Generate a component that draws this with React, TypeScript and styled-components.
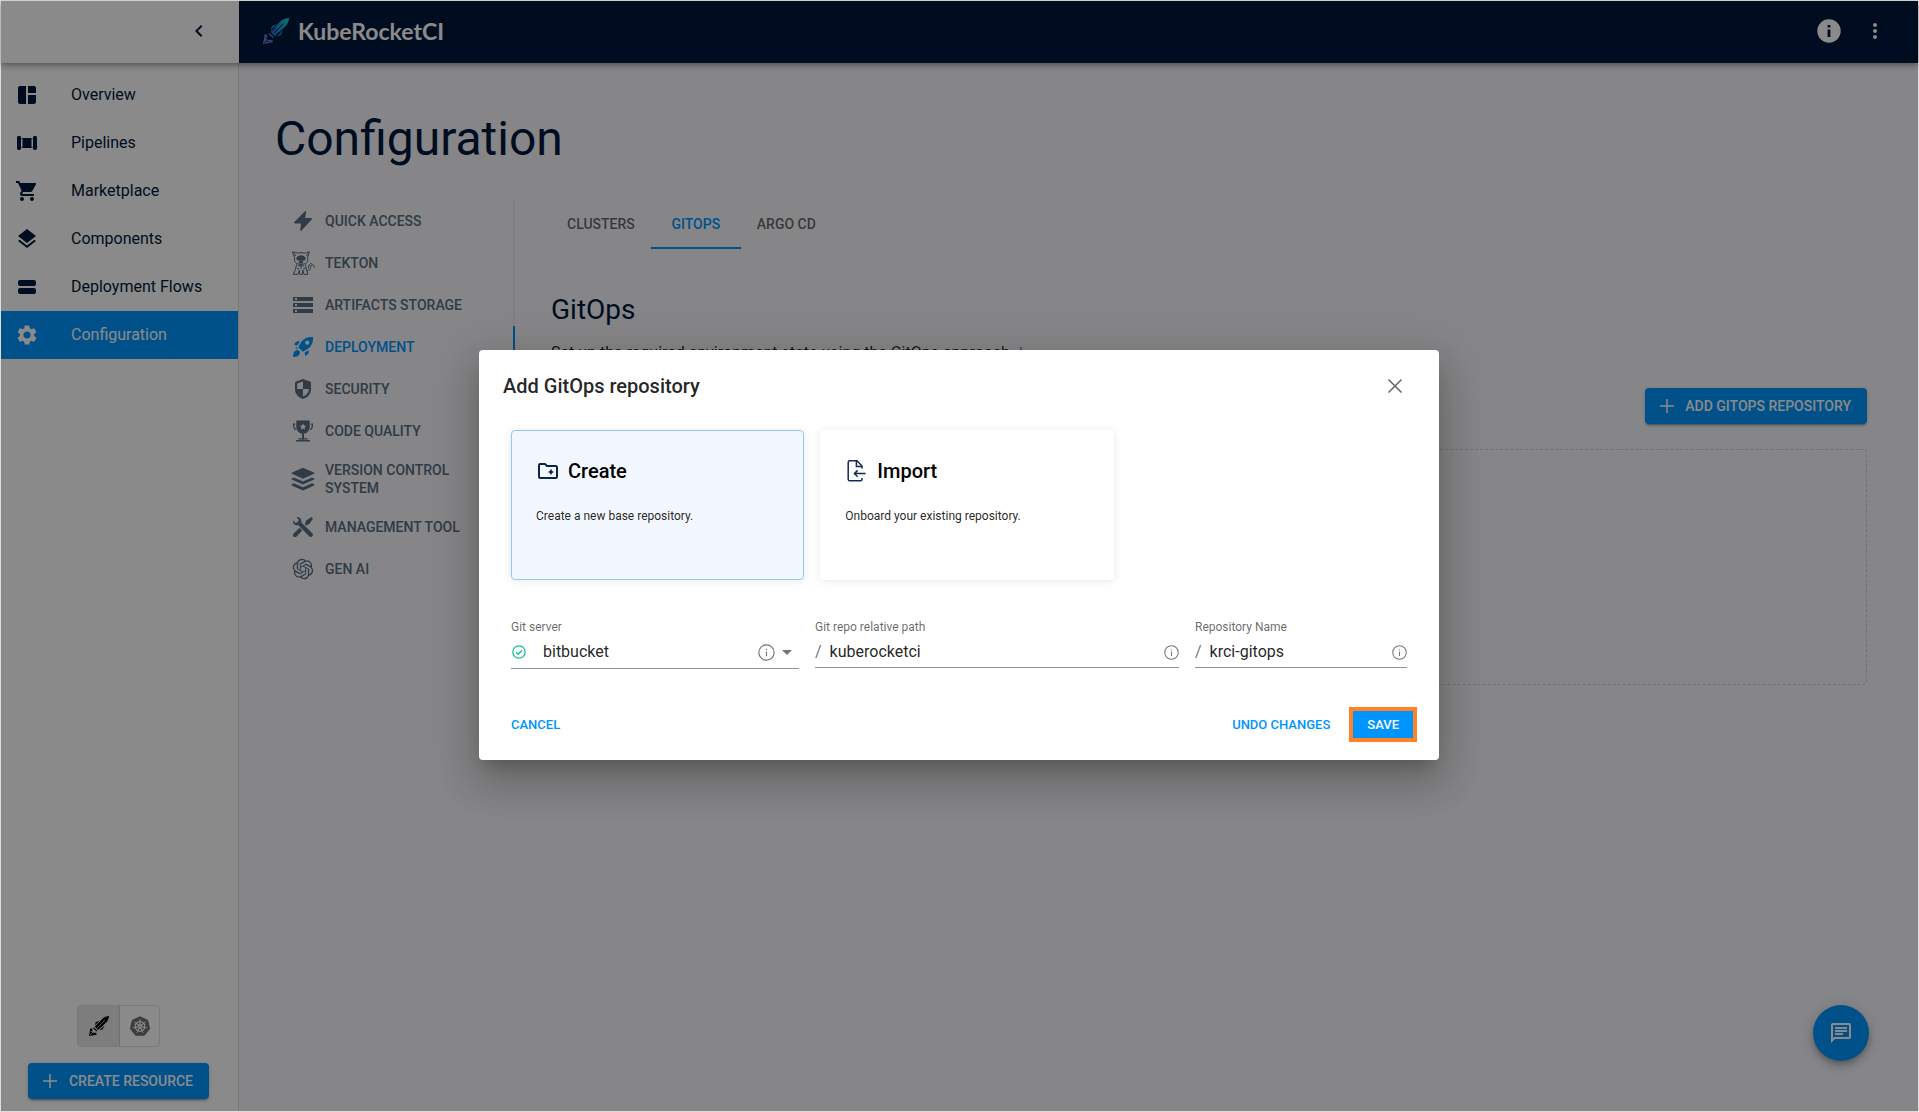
import React, { useState } from 'react';
import styled, { createGlobalStyle, css } from 'styled-components';
import {
  MdSpaceDashboard,
  MdShoppingCart,
  MdLayers,
  MdSettings,
  MdStorage,
  MdChevronLeft,
  MdMoreVert,
  MdOutlineChat,
  MdArrowDropDown,
} from 'react-icons/md';
import { SiKubernetes, SiOpenai } from 'react-icons/si';

const color = {
  navy: '#00173a',
  blue: '#0094ff',
  slate: '#596d80',
  page: '#f7f8fc',
  ink: 'rgba(0, 0, 0, 0.87)',
  muted: 'rgba(0, 0, 0, 0.6)',
  orange: '#ff8128',
};

const GlobalStyle = createGlobalStyle`
  *, *::before, *::after { box-sizing: border-box; }
  body {
    margin: 0;
    font-family: Roboto, sans-serif;
    font-size: 16px;
    line-height: 24px;
    color: ${color.ink};
    -webkit-font-smoothing: antialiased;
  }
  button, input, select { font: inherit; color: inherit; }
  h1, h2, p, ul { margin: 0; padding: 0; }
  ul { list-style: none; }
  a { color: inherit; text-decoration: none; }
  svg { display: block; flex: none; }
`;

/* ---------- Drawings ---------- */

const BrandRocket = () => (
  <svg width="26" height="26" viewBox="0 0 24 24" aria-hidden="true">
    <defs>
      <linearGradient id="brand" x1="24" y1="0" x2="0" y2="24" gradientUnits="userSpaceOnUse">
        <stop offset="0" stopColor="#16d9d0" />
        <stop offset="0.5" stopColor="#1c7fd0" />
        <stop offset="1" stopColor="#8d76d8" />
      </linearGradient>
    </defs>
    <g fill="url(#brand)">
      <path d="M24 0 C20 .3 17.5 1.8 15.5 3.8 L7 12.6 L11 16.8 L20.2 8.2 C22.4 6 23.8 3.6 24 0Z" />
      <path d="M12.6 5.6 L8 7.6 L7.2 11.2Z M18.4 11.4 L16.4 16 L12.6 17Z" />
      <path d="M6 13.6 L10 17.6 L9 18.6 L5 14.6Z" />
      <path d="M1.6 14.8 L4 15.4 V20 L8.6 20.2 L9.2 22.4 L0 24Z" />
    </g>
    <path d="M18.8 5.2 L10 14" stroke={color.navy} strokeWidth="0.9" />
    <path d="M11.2 9.6 L8.6 12.2 M14.6 13 L12 15.6" stroke={color.navy} strokeWidth="0.7" />
    <path d="M1 23 L6.2 17.8 M2 18.6 L5.4 18.6 M3 21.8 L5.6 21.8" stroke={color.navy} strokeWidth="0.7" />
  </svg>
);

const MonoRocket = () => (
  <svg width="20" height="20" viewBox="0 0 24 24" aria-hidden="true">
    <path d="M24 0 C20 .3 17.5 1.8 15.5 3.8 L7 12.6 L11 16.8 L20.2 8.2 C22.4 6 23.8 3.6 24 0Z" />
    <path d="M12.6 5.6 L8 7.6 L7.2 11.2Z M18.4 11.4 L16.4 16 L12.6 17Z" />
    <path d="M6 13.6 L10 17.6 L9 18.6 L5 14.6Z" />
    <path d="M1.6 14.8 L4 15.4 V20 L8.6 20.2 L9.2 22.4 L0 24Z" />
    <path d="M18.8 5.2 L10 14 M1 23 L6.2 17.8 M2 18.6 H5.4" stroke="#dedede" strokeWidth="0.9" />
  </svg>
);

const PipelinesIcon = () => (
  <svg width="24" height="24" viewBox="0 0 24 24" fill="currentColor" aria-hidden="true">
    <rect x="2" y="5" width="4" height="14" rx="1.4" />
    <rect x="18" y="5" width="4" height="14" rx="1.4" />
    <rect x="7.5" y="7" width="9" height="10" />
    <path d="M6 7 H18 V8.2 H6Z M6 15.8 H18 V17 H6Z" opacity="0.4" />
  </svg>
);

const FlowsIcon = () => (
  <svg width="24" height="24" viewBox="0 0 24 24" fill="currentColor" aria-hidden="true">
    <rect x="3" y="5" width="18" height="6" rx="2" />
    <rect x="3" y="13" width="18" height="6" rx="2" />
  </svg>
);

const BoltIcon = () => (
  <svg width="24" height="24" viewBox="0 0 24 24" fill="currentColor" aria-hidden="true">
    <path d="M14 2.2 C14.6 1.8 15.2 2.2 15 3 L14.2 9 H20 C21 9 21.4 9.8 20.7 10.5 L10.6 21.6 C10 22.2 9.2 21.8 9.3 21 L10 14.6 H4 C3 14.6 2.7 13.8 3.3 13.1Z" />
  </svg>
);

const CatIcon = () => (
  <svg width="24" height="24" viewBox="0 0 24 24" fill="none" stroke="currentColor" strokeWidth="1" aria-hidden="true">
    <path d="M3.6 6.5 L1.4 .8 L6.5 2.2 Q10 .9 13.4 2.2 L18.4 .8 L16.6 6.5 Q17.6 11 14.4 12.6 Q10 14.6 5.6 12.6 Q2.6 11 3.6 6.5Z" />
    <path d="M3 2.4 L4.8 5 M17 2.4 L15.4 5" />
    <path d="M5.6 7.4 Q6.2 4.8 10 4.8 T14.4 7.4 Q14.2 9.4 12 9.2 L8 9.2 Q5.8 9.4 5.6 7.4Z" fill="currentColor" />
    <path d="M8.4 10.6 H11.6 V12 H8.4Z" fill="currentColor" />
    <path d="M5.6 13.4 L4.4 18.8 L2.4 23.4 H7 L8.4 19 L8.8 23.4 H11.4 L11.8 19 L13 23.4 H17 L15.4 18.4 L14.4 13.4" />
    <path d="M7 14.8 L13 14.8 M10 15 V18 M6 17.4 L8 18 M12.2 18 L14.4 17.4" />
    <path d="M15.6 19.4 Q19.6 20 19.4 16.6 Q19.6 13.6 22 13.8 Q24 14.4 23 16.8 M17.4 17.4 Q17.8 12.4 20.8 12.6" />
  </svg>
);

const RocketIcon = () => (
  <svg width="24" height="24" viewBox="0 0 24 24" fill="currentColor" aria-hidden="true">
    <path
      fillRule="evenodd"
      d="M22 2 C16.5 1.6 12.8 3.5 10.2 7 L7.2 12.2 L11.8 16.8 L17 13.8 C20.5 11.2 22.4 7.5 22 2Z M16.2 5.6 a2.1 2.1 0 1 1 0 4.2 a2.1 2.1 0 0 1 0 -4.2Z"
    />
    <path d="M8.8 6.4 C6 5.6 4.2 7 3 9.8 L6.4 10.4Z M17.6 15.2 C18.4 18 17 19.8 14.2 21 L13.6 17.6Z" />
    <path d="M6 15 C3.2 15.6 2.2 18 2 22 C6 21.8 8.4 20.8 9 18 Q9 15 6 15Z" />
    <path d="M5.8 12.2 L7 13.4 L5.6 14 L4.4 12.8Z" />
  </svg>
);

const ShieldIcon = () => (
  <svg width="24" height="24" viewBox="0 0 24 24" fill="currentColor" aria-hidden="true">
    <path
      fillRule="evenodd"
      d="M12 2 L19 4.4 Q20 4.8 20 6 V12 C20 17 16.8 20.4 12 22 C7.2 20.4 4 17 4 12 V6 Q4 4.8 5 4.4Z M12 4.4 L6.2 6.4 V12 H12Z M12 12 V19.6 C15.6 18.2 17.8 15.6 17.8 12Z"
    />
  </svg>
);

const TrophyIcon = () => (
  <svg width="24" height="24" viewBox="0 0 24 24" fill="currentColor" aria-hidden="true">
    <path
      fillRule="evenodd"
      d="M5.4 1.6 H18.6 L18.8 7 C18.8 11.6 16 14.6 12 14.8 C8 14.6 5.2 11.6 5.2 7Z M12 4.2 L13 6.5 L15.4 6.7 L13.6 8.3 L14.2 10.7 L12 9.4 L9.8 10.7 L10.4 8.3 L8.6 6.7 L11 6.5Z"
    />
    <path d="M11 14.4 H13 V20.6 H11Z" />
    <path d="M7.4 19.2 H16.6 V20.6 H7.4Z M5 20.9 H19 V22.6 H5Z" />
    <path d="M4.2 5.2 H2.6 Q2.4 9.6 5 10.6 M19.8 5.2 H21.4 Q21.6 9.6 19 10.6" fill="none" stroke="currentColor" strokeWidth="1.3" />
  </svg>
);

const StackIcon = () => (
  <svg width="24" height="24" viewBox="0 0 24 24" fill="currentColor" aria-hidden="true">
    <path d="M12 .8 L23 5.6 Q24 6.2 23 6.8 L12 11.8 L1 6.8 Q0 6.2 1 5.6Z" />
    <path d="M3 10.4 L12 14.4 L21 10.4 L23.2 11.4 Q24 12 23.2 12.6 L12 17.6 L.8 12.6 Q0 12 .8 11.4Z" />
    <path d="M3 16.2 L12 20.2 L21 16.2 L23.2 17.2 Q24 17.8 23.2 18.4 L12 23.4 L.8 18.4 Q0 17.8 .8 17.2Z" />
  </svg>
);

const ToolsIcon = () => (
  <svg width="24" height="24" viewBox="0 0 24 24" fill="currentColor" aria-hidden="true">
    <path d="M2 5.6 L5 8.2 L8 5.2 L5.6 2 C8.6 1.6 11 4 10.4 7.4 L21.6 18.4 Q22.6 20 21.4 21.2 T18.4 21.6 L7.4 10.2 C4 11 1.6 8.6 2 5.6Z" />
    <path d="M14 8.2 L15.2 5.4 L20.4 2 L22 3.6 L18.6 8.8 L16 10 L15 11Z" />
    <path d="M8.6 12.8 L11.2 15.4 L5.6 21.4 Q4 22.6 2.6 21.4 T2.6 18.4Z" />
  </svg>
);

const FolderPlusIcon = () => (
  <svg width="24" height="24" viewBox="0 0 24 24" fill="none" stroke="#0a244b" strokeWidth="2" aria-hidden="true">
    <path d="M4.2 5 H9 L11 7 H19.8 Q21 7 21 8.2 V17.8 Q21 19 19.8 19 H4.2 Q3 19 3 17.8 V6.2 Q3 5 4.2 5Z" strokeLinejoin="round" />
    <path d="M15 9.8 L16.1 11.9 L18.2 13 L16.1 14.1 L15 16.2 L13.9 14.1 L11.8 13 L13.9 11.9Z" fill="#0a244b" stroke="none" />
  </svg>
);

const FileImportIcon = () => (
  <svg width="24" height="24" viewBox="0 0 24 24" fill="none" stroke="#122b50" strokeWidth="1.5" aria-hidden="true">
    <path d="M17 9.6 V7 L12 1.8 H4.8 Q3.2 1.8 3.2 3.4 V20.2 Q3.2 21.8 4.8 21.8 H15.4 Q17 21.8 17 20.2 V19" />
    <path d="M11.4 2 V7.6 H16.8" />
    <path d="M20.6 14.6 H9.2 M12.6 11.4 L9.4 14.6 L12.6 17.8" />
  </svg>
);

const PlusIcon = () => (
  <svg width="20" height="20" viewBox="0 0 20 20" stroke="currentColor" strokeWidth="1.5" aria-hidden="true">
    <path d="M10 3 V17 M3 10 H17" />
  </svg>
);

const CloseIcon = () => (
  <svg width="20" height="20" viewBox="0 0 20 20" stroke="#666" strokeWidth="1.5" aria-hidden="true">
    <path d="M3.5 3.5 L16.5 16.5 M16.5 3.5 L3.5 16.5" />
  </svg>
);

const InfoOutline = ({ size }: { size: number }) => (
  <svg width={size} height={size} viewBox="0 0 16 16" fill="none" stroke="#757575" aria-hidden="true">
    <circle cx="8" cy="8" r="7.2" strokeWidth="1.1" />
    <path d="M8 7 V11.6 M8 4.4 V5.7" strokeWidth="1.1" />
  </svg>
);

const InfoSolid = () => (
  <svg width="24" height="24" viewBox="0 0 24 24" aria-hidden="true">
    <circle cx="12" cy="12" r="11.7" fill="#fff" />
    <path d="M10.6 6 H13.4 V8.4 H10.6Z M10.6 10.4 H13.4 V18 H10.6Z" fill={color.navy} />
  </svg>
);

const CheckBadge = () => (
  <svg width="16" height="16" viewBox="0 0 16 16" fill="none" stroke="#18be94" strokeWidth="1.3" aria-hidden="true">
    <circle cx="8" cy="8" r="6.2" />
    <path d="M5 8.2 L7.2 10.3 L11 6.2" />
  </svg>
);

/* ---------- Shell ---------- */

const Frame = styled.div`
  position: relative;
  display: flex;
  flex-direction: column;
  min-height: 100vh;
  border: 1px solid #dcdedc;
  background: ${color.page};
`;

const TopBar = styled.header`
  display: flex;
  height: 62px;
  z-index: 1;
  box-shadow: 0 2px 4px -1px rgba(0, 0, 0, 0.2), 0 4px 5px rgba(0, 0, 0, 0.14), 0 1px 10px rgba(0, 0, 0, 0.12);
`;

const SideToggle = styled.div`
  display: flex;
  align-items: center;
  justify-content: flex-end;
  width: 238px;
  padding: 0 28px 2px 0;
  background: #fff;
  color: ${color.navy};
`;

const IconButton = styled.button`
  display: flex;
  align-items: center;
  justify-content: center;
  padding: 0;
  border: 0;
  background: none;
  cursor: pointer;
`;

const BrandBar = styled.div`
  flex: 1;
  display: flex;
  align-items: center;
  gap: 9px;
  padding: 0 31px 2px 24px;
  background: ${color.navy};
  color: #fff;
`;

const BrandName = styled.span`
  margin-right: auto;
  font-family: Lato, sans-serif;
  font-size: 23px;
  font-weight: 700;
`;

const BarActions = styled.div`
  display: flex;
  gap: 22px;
`;

const Body = styled.div`
  flex: 1;
  display: flex;
`;

const Sidebar = styled.aside`
  display: flex;
  flex-direction: column;
  width: 238px;
  padding: 8px 0 12px;
  border-right: 1px solid #e0e0e0;
  background: #fff;
`;

const NavLink = styled.a<{ $active?: boolean }>`
  display: flex;
  align-items: center;
  gap: 32px;
  height: 48px;
  padding-left: 14px;
  color: ${(p) => (p.$active ? '#fff' : color.navy)};
  background: ${(p) => (p.$active ? color.blue : 'transparent')};
`;

const SidebarFooter = styled.div`
  display: flex;
  flex-direction: column;
  align-items: center;
  gap: 16px;
  margin-top: auto;
  padding-right: 2px;
`;

const ToggleGroup = styled.div`
  display: flex;
  border: 1px solid #e0e0e0;
  border-radius: 4px;
  overflow: hidden;
`;

const ToggleButton = styled.button<{ $active?: boolean }>`
  display: flex;
  align-items: center;
  justify-content: center;
  width: ${(p) => (p.$active ? 41 : 40)}px;
  height: 40px;
  padding: 0;
  border: 0;
  background: ${(p) => (p.$active ? '#e8e8e8' : 'transparent')};
  color: ${(p) => (p.$active ? '#000' : '#707070')};
  & + & {
    border-left: 1px solid #d0d0d0;
  }
`;

const PrimaryButton = styled.button<{ $gap: number }>`
  display: inline-flex;
  align-items: center;
  gap: ${(p) => p.$gap}px;
  height: 36px;
  padding: 0 16px 0 12px;
  border: 0;
  border-radius: 4px;
  background: ${color.blue};
  color: #fff;
  font-size: 14px;
  font-weight: 500;
  text-transform: uppercase;
  white-space: nowrap;
  box-shadow: 0 3px 1px -2px rgba(0, 0, 0, 0.2), 0 2px 2px rgba(0, 0, 0, 0.14), 0 1px 5px rgba(0, 0, 0, 0.12);
`;

/* ---------- Main area ---------- */

const Main = styled.main`
  flex: 1;
  padding: 48px 51px 0 36px;
`;

const PageTitle = styled.h1`
  margin-bottom: 33px;
  color: ${color.navy};
  font-size: 48px;
  font-weight: 400;
  line-height: 56px;
`;

const Columns = styled.div`
  display: flex;
  gap: 36px;
`;

const SideTabs = styled.div`
  display: flex;
  flex-direction: column;
  flex: none;
  align-self: flex-start;
  width: 240px;
`;

const SideTab = styled.button<{ $active?: boolean }>`
  display: flex;
  align-items: center;
  gap: 10px;
  min-height: 42px;
  padding: 9px 16px;
  border: 0;
  border-right: 2px solid ${(p) => (p.$active ? color.blue : '#eaebf2')};
  background: none;
  color: ${(p) => (p.$active ? color.blue : color.slate)};
  font-size: 14px;
  font-weight: 500;
  line-height: 18px;
  text-align: left;
  text-transform: uppercase;
`;

const Panel = styled.section`
  flex: 1;
  display: flex;
  flex-direction: column;
`;

const TabRow = styled.div`
  display: flex;
`;

const TopTab = styled.button<{ $active?: boolean }>`
  min-width: 90px;
  height: 49px;
  padding: 0 16px;
  border: 0;
  border-bottom: 2px solid ${(p) => (p.$active ? color.blue : 'transparent')};
  background: none;
  color: ${(p) => (p.$active ? color.blue : color.muted)};
  font-size: 14px;
  font-weight: 500;
  text-transform: uppercase;
`;

const PanelTitle = styled.h2`
  margin-top: 43px;
  color: ${color.navy};
  font-size: 28px;
  font-weight: 400;
  line-height: 36px;
`;

const Description = styled.p`
  margin: 13px 0 23px;
`;

const LearnMore = styled.a`
  margin-left: 5px;
  color: ${color.blue};
  font-size: 14px;
`;

const PanelActions = styled.div`
  display: flex;
  justify-content: flex-end;
  margin-bottom: 25px;
`;

const EmptyBox = styled.div`
  height: 236px;
  border: 1px dashed #d2d3d6;
  border-radius: 4px;
`;

const ChatButton = styled.button`
  position: absolute;
  right: 49px;
  bottom: 50px;
  display: flex;
  align-items: center;
  justify-content: center;
  width: 56px;
  height: 56px;
  border: 0;
  border-radius: 50%;
  background: ${color.blue};
  color: #fff;
  box-shadow: 0 3px 5px -1px rgba(0, 0, 0, 0.2), 0 6px 10px rgba(0, 0, 0, 0.14), 0 1px 18px rgba(0, 0, 0, 0.12);
`;

/* ---------- Dialog ---------- */

const Backdrop = styled.div`
  position: absolute;
  inset: 0;
  z-index: 2;
  display: flex;
  align-items: center;
  justify-content: center;
  padding: 0 1px 2px 0;
  background: rgba(0, 0, 0, 0.46);
`;

const DialogBox = styled.div`
  width: 100%;
  max-width: 960px;
  border-radius: 4px;
  background: #fff;
  box-shadow: 0 11px 15px -7px rgba(0, 0, 0, 0.2), 0 24px 38px 3px rgba(0, 0, 0, 0.14), 0 9px 46px 8px rgba(0, 0, 0, 0.12);
`;

const DialogHeader = styled.div`
  display: flex;
  align-items: center;
  justify-content: space-between;
  padding: 24px 34px 24px 24px;
`;

const DialogTitle = styled.h2`
  font-size: 20px;
  font-weight: 500;
  line-height: 24px;
`;

const DialogBody = styled.div`
  padding: 8px 32px 38px;
`;

const Choices = styled.div`
  display: flex;
  gap: 16px;
  margin-bottom: 38px;
`;

const HiddenRadio = styled.input`
  position: absolute;
  opacity: 0;
  pointer-events: none;
`;

const Choice = styled.label<{ $active: boolean }>`
  width: calc((100% - 16px) / 3);
  height: 150px;
  padding: 28px 24px;
  border: 1px solid #fff;
  border-radius: 4px;
  box-shadow: 0 1px 10px rgba(0, 0, 0, 0.09);
  cursor: pointer;
  ${(p) =>
    p.$active &&
    css`
      border-color: #90c8ff;
      background: #f3f8ff;
    `}
`;

const ChoiceHead = styled.span`
  display: flex;
  align-items: center;
  gap: 8px;
  color: #000;
  font-size: 20px;
  font-weight: 500;
`;

const ChoiceText = styled.span`
  display: block;
  margin-top: 24px;
  font-size: 12px;
  line-height: 18px;
`;

const FieldGrid = styled.div`
  display: grid;
  grid-template-columns: repeat(12, minmax(0, 1fr));
  gap: 16px;
  align-items: start;
`;

const Field = styled.div<{ $span: number }>`
  grid-column: span ${(p) => p.$span};
`;

const FieldLabel = styled.label`
  display: block;
  color: ${color.muted};
  font-size: 12px;
  line-height: 18px;
`;

const FieldLine = styled.div<{ $gap: number }>`
  display: flex;
  align-items: center;
  gap: ${(p) => p.$gap}px;
  padding: 4px 0 3px;
  border-bottom: 1px solid #949494;
`;

const Slash = styled.span`
  color: ${color.muted};
`;

const TextInput = styled.input`
  flex: 1;
  min-width: 0;
  height: 24px;
  padding: 0;
  border: 0;
  outline: 0;
  background: none;
`;

const SelectLine = styled(FieldLine)`
  padding-bottom: 4px;
`;

const SelectInput = styled.select`
  flex: 1;
  min-width: 0;
  height: 24px;
  margin-left: 16px;
  padding: 0;
  border: 0;
  outline: 0;
  background: none;
  appearance: none;
`;

const SelectArrow = styled.span`
  color: #757575;
`;

const DialogActions = styled.div`
  display: flex;
  align-items: center;
  gap: 11px;
  padding: 0 22px 18px 24px;
`;

const TextButton = styled.button<{ $first?: boolean }>`
  height: 28px;
  padding: 0 8px;
  margin-right: ${(p) => (p.$first ? 'auto' : '0')};
  border: 0;
  background: none;
  color: ${color.blue};
  font-size: 13px;
  font-weight: 500;
  line-height: 24px;
  text-transform: uppercase;
`;

const SaveButton = styled.button`
  height: 35px;
  padding: 0 14px;
  border: 4px solid ${color.orange};
  background: ${color.blue};
  color: #fff;
  font-size: 13px;
  font-weight: 500;
  line-height: 24px;
  text-transform: uppercase;
`;

const navItems = [
  { label: 'Overview', icon: <MdSpaceDashboard size={24} /> },
  { label: 'Pipelines', icon: <PipelinesIcon /> },
  { label: 'Marketplace', icon: <MdShoppingCart size={24} /> },
  { label: 'Components', icon: <MdLayers size={24} /> },
  { label: 'Deployment Flows', icon: <FlowsIcon /> },
  { label: 'Configuration', icon: <MdSettings size={24} /> },
];

const sideTabs = [
  { label: 'Quick access', icon: <BoltIcon /> },
  { label: 'Tekton', icon: <CatIcon /> },
  { label: 'Artifacts storage', icon: <MdStorage size={24} /> },
  { label: 'Deployment', icon: <RocketIcon /> },
  { label: 'Security', icon: <ShieldIcon /> },
  { label: 'Code quality', icon: <TrophyIcon /> },
  { label: 'Version control system', icon: <StackIcon /> },
  { label: 'Management tool', icon: <ToolsIcon /> },
  { label: 'Gen AI', icon: <SiOpenai size={24} viewBox="-2 -2 28 28" /> },
];

const choices = [
  { id: 'create', title: 'Create', text: 'Create a new base repository.', icon: <FolderPlusIcon /> },
  { id: 'import', title: 'Import', text: 'Onboard your existing repository.', icon: <FileImportIcon /> },
];

const AddRepositoryDialog = () => {
  const [mode, setMode] = useState('create');
  return (
    <Backdrop>
      <DialogBox role="dialog" aria-modal="true" aria-labelledby="dialog-title">
        <DialogHeader>
          <DialogTitle id="dialog-title">Add GitOps repository</DialogTitle>
          <IconButton type="button" aria-label="Close">
            <CloseIcon />
          </IconButton>
        </DialogHeader>
        <DialogBody>
          <Choices>
            {choices.map((c) => (
              <Choice key={c.id} $active={mode === c.id}>
                <HiddenRadio type="radio" name="mode" checked={mode === c.id} onChange={() => setMode(c.id)} />
                <ChoiceHead>
                  {c.icon}
                  {c.title}
                </ChoiceHead>
                <ChoiceText>{c.text}</ChoiceText>
              </Choice>
            ))}
          </Choices>
          <FieldGrid>
            <Field $span={4}>
              <FieldLabel htmlFor="server">Git server</FieldLabel>
              <SelectLine $gap={0}>
                <CheckBadge />
                <SelectInput id="server" defaultValue="bitbucket">
                  <option value="bitbucket">bitbucket</option>
                </SelectInput>
                <InfoOutline size={17} />
                <SelectArrow>
                  <MdArrowDropDown size={24} />
                </SelectArrow>
              </SelectLine>
            </Field>
            <Field $span={5}>
              <FieldLabel htmlFor="path">Git repo relative path</FieldLabel>
              <FieldLine $gap={8}>
                <Slash>/</Slash>
                <TextInput id="path" defaultValue="kuberocketci" />
                <InfoOutline size={15} />
              </FieldLine>
            </Field>
            <Field $span={3}>
              <FieldLabel htmlFor="name">Repository Name</FieldLabel>
              <FieldLine $gap={8}>
                <Slash>/</Slash>
                <TextInput id="name" defaultValue="krci-gitops" />
                <InfoOutline size={15} />
              </FieldLine>
            </Field>
          </FieldGrid>
        </DialogBody>
        <DialogActions>
          <TextButton type="button" $first>
            Cancel
          </TextButton>
          <TextButton type="button">Undo changes</TextButton>
          <SaveButton type="button">Save</SaveButton>
        </DialogActions>
      </DialogBox>
    </Backdrop>
  );
};

export default function App() {
  return (
    <>
      <GlobalStyle />
      <Frame>
        <TopBar>
          <SideToggle>
            <IconButton type="button" aria-label="Collapse sidebar">
              <MdChevronLeft size={24} />
            </IconButton>
          </SideToggle>
          <BrandBar>
            <BrandRocket />
            <BrandName>KubeRocketCI</BrandName>
            <BarActions>
              <IconButton type="button" aria-label="Information">
                <InfoSolid />
              </IconButton>
              <IconButton type="button" aria-label="More">
                <MdMoreVert size={24} />
              </IconButton>
            </BarActions>
          </BrandBar>
        </TopBar>
        <Body>
          <Sidebar>
            <nav>
              <ul>
                {navItems.map((item) => (
                  <li key={item.label}>
                    <NavLink href="#" $active={item.label === 'Configuration'}>
                      {item.icon}
                      {item.label}
                    </NavLink>
                  </li>
                ))}
              </ul>
            </nav>
            <SidebarFooter>
              <ToggleGroup>
                <ToggleButton type="button" $active aria-label="KubeRocketCI view">
                  <MonoRocket />
                </ToggleButton>
                <ToggleButton type="button" aria-label="Kubernetes view">
                  <SiKubernetes size={20} />
                </ToggleButton>
              </ToggleGroup>
              <PrimaryButton type="button" $gap={9}>
                <PlusIcon />
                Create resource
              </PrimaryButton>
            </SidebarFooter>
          </Sidebar>
          <Main>
            <PageTitle>Configuration</PageTitle>
            <Columns>
              <SideTabs role="tablist" aria-orientation="vertical">
                {sideTabs.map((tab) => {
                  const active = tab.label === 'Deployment';
                  return (
                    <SideTab key={tab.label} type="button" role="tab" aria-selected={active} $active={active}>
                      {tab.icon}
                      {tab.label}
                    </SideTab>
                  );
                })}
              </SideTabs>
              <Panel>
                <TabRow role="tablist">
                  {['Clusters', 'GitOps', 'Argo CD'].map((t) => (
                    <TopTab key={t} type="button" role="tab" aria-selected={t === 'GitOps'} $active={t === 'GitOps'}>
                      {t}
                    </TopTab>
                  ))}
                </TabRow>
                <PanelTitle>GitOps</PanelTitle>
                <Description>
                  Set up the required environment state using the GitOps approach.
                  <LearnMore href="#">Learn more</LearnMore>
                </Description>
                <PanelActions>
                  <PrimaryButton type="button" $gap={8}>
                    <PlusIcon />
                    Add GitOps repository
                  </PrimaryButton>
                </PanelActions>
                <EmptyBox />
              </Panel>
            </Columns>
          </Main>
        </Body>
        <ChatButton type="button" aria-label="Open chat">
          <MdOutlineChat size={24} />
        </ChatButton>
        <AddRepositoryDialog />
      </Frame>
    </>
  );
}
